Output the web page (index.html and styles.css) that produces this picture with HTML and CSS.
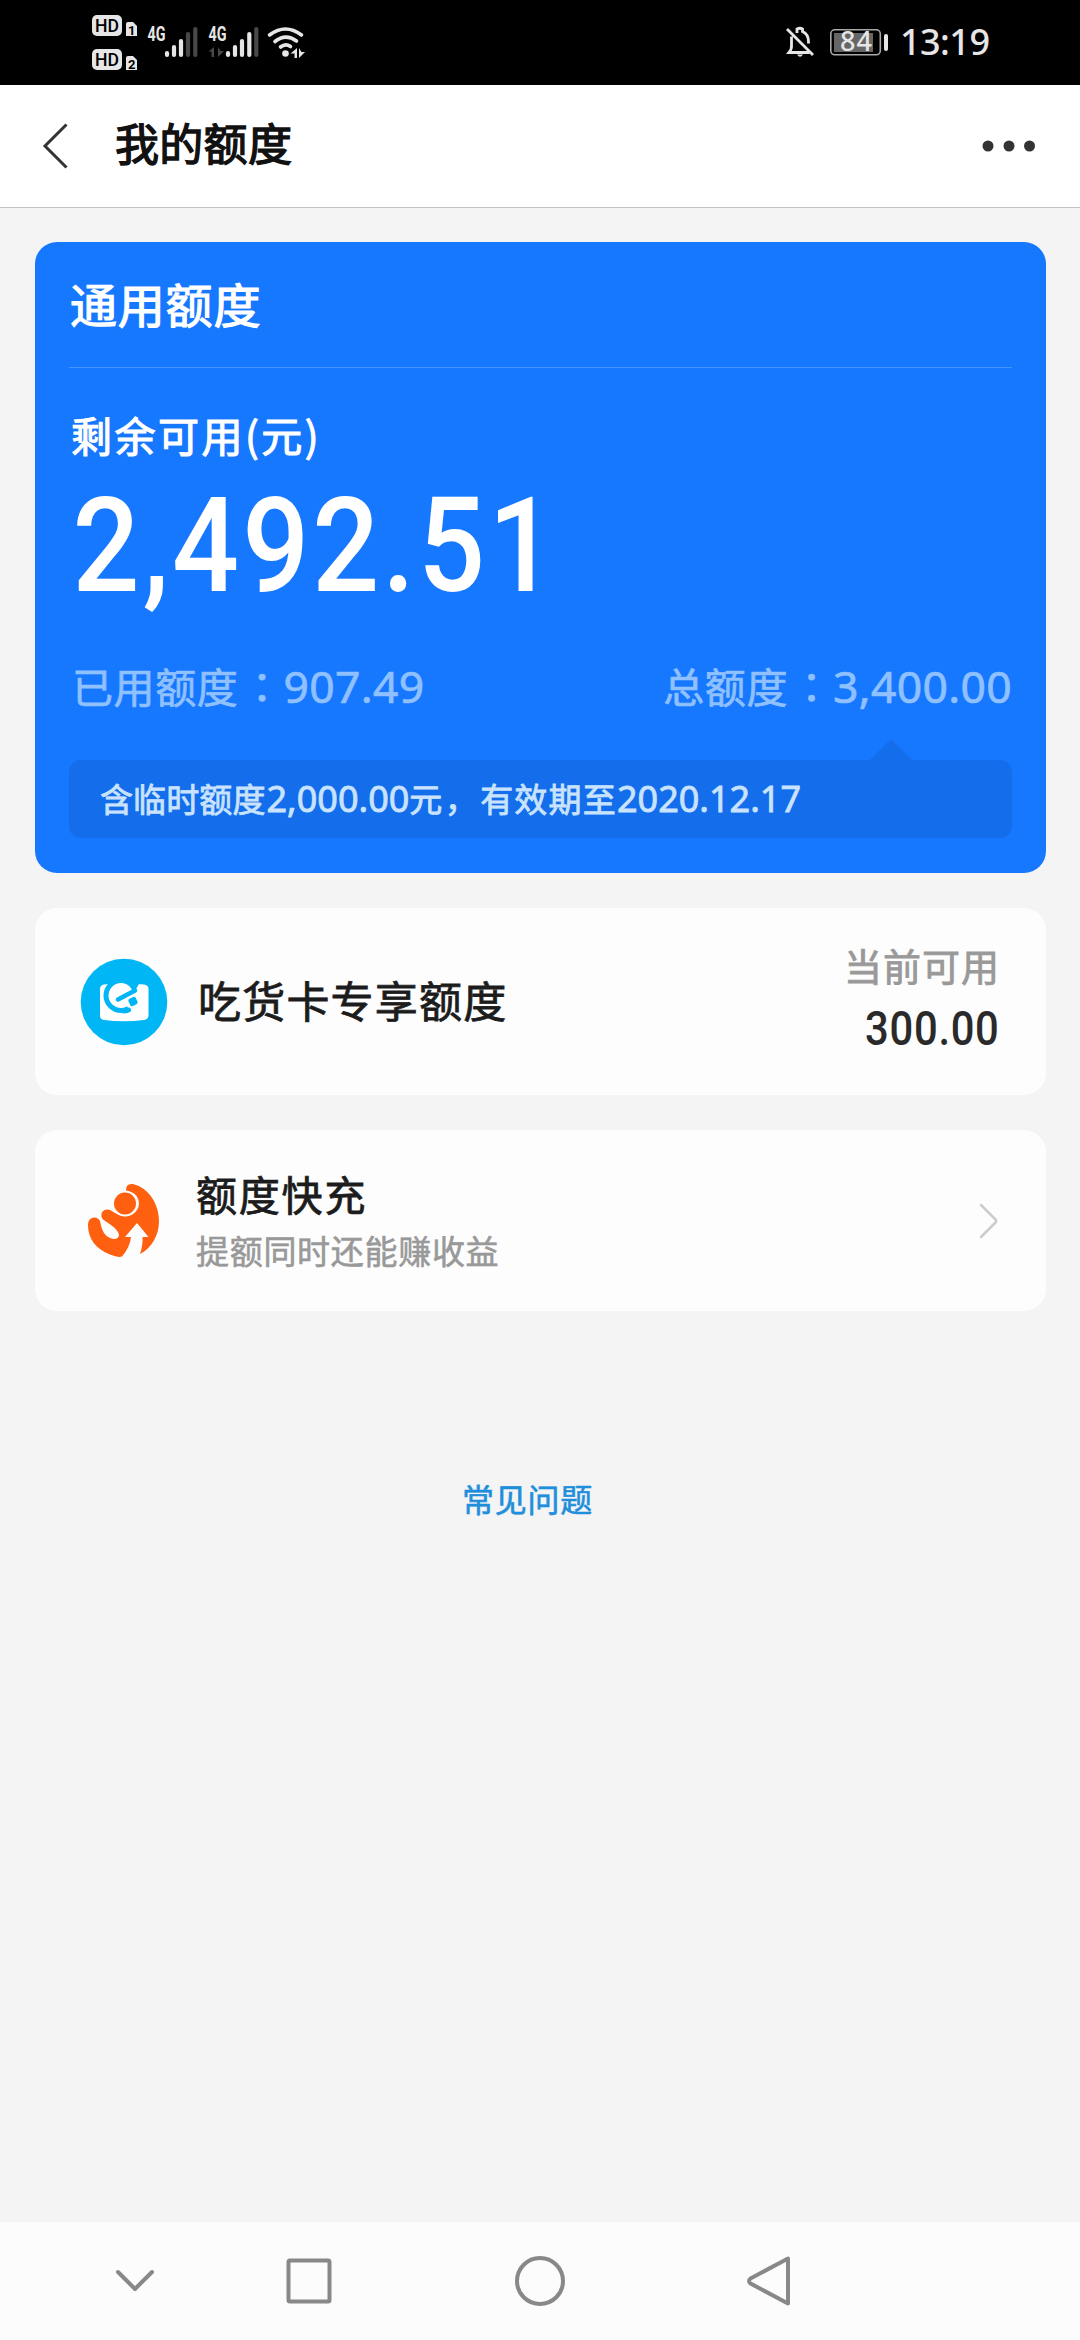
FILE: index.html
```html
<!DOCTYPE html>
<html lang="zh-CN">
<head>
<meta charset="utf-8">
<title>我的额度</title>
<link rel="stylesheet" href="styles.css">
</head>
<body>
<div class="screen">
  <div class="status">
    <svg class="status-left" width="220" height="85" viewBox="90 0 220 85">
      <g fill="#e6e6e6">
        <rect x="92" y="15" width="30" height="21" rx="5"/>
        <rect x="92" y="49" width="30" height="21" rx="5"/>
        <path d="M126 24q0-2 2-2h5l4 4v10h-11zM126 58q0-2 2-2h5l4 4v10h-11z"/>
      </g>
      <g class="hd" fill="#000">
        <text x="95" y="32" textLength="24" lengthAdjust="spacingAndGlyphs">HD</text>
        <text x="95" y="66" textLength="24" lengthAdjust="spacingAndGlyphs">HD</text>
      </g>
      <g class="sim" fill="#000"><text x="128" y="34.500">1</text><text x="128" y="68.500">2</text></g>
      <g class="net" fill="#e6e6e6">
        <text x="147.500" y="40.500" textLength="18" lengthAdjust="spacingAndGlyphs">4G</text>
        <text x="208.500" y="40.500" textLength="18" lengthAdjust="spacingAndGlyphs">4G</text>
      </g>
      <g stroke="#e6e6e6" stroke-width="4.200" stroke-linecap="round">
        <path d="M167 53v2M174 47v8M181 41v14"/>
        <path d="M228 53v2M235 47v8M242 41v14M249.300 34v21"/>
        <path stroke="#484848" d="M188 34v21M195.300 29v26M256.300 29v26"/>
      </g>
      <path fill="#484848" d="M214 47v10h-2.500v-5.500h-3zM218 47v10l6-6h-3.500z"/>
      <g fill="none" stroke="#e6e6e6" stroke-width="3.600" stroke-linecap="round">
        <path d="M269.500 35Q285.500 23 301.500 35M275 41.500Q285.500 33 296.500 41M280.500 47Q285.500 43 290.500 46.500"/>
      </g>
      <circle cx="285.500" cy="53.500" r="3.300" fill="#e6e6e6"/>
      <path fill="#e6e6e6" d="M297 48v10h-2.500v-4.500h-4zM299 48v10l6-6h-3.500z"/>
    </svg>
    <svg class="status-right" width="210" height="85" viewBox="780 0 210 85">
      <g fill="none" stroke="#e6e6e6" stroke-width="2.800" stroke-linecap="square">
        <path d="M788 30l24 24M808 52.500H789Q792 49 791.500 45V38M797 31.500v-2.500q3-1.500 5.500 0v2.500Q808.500 34 808.500 42"/>
      </g>
      <path fill="#e6e6e6" d="M797 54.500h6q-3 4.500-6 0z"/>
      <rect x="830.800" y="29.800" width="49.500" height="25" rx="4" fill="none" stroke="#a8a8a8" stroke-width="1.600"/>
      <rect x="834" y="33" width="39" height="19" fill="#666"/>
      <rect x="884" y="34" width="4" height="17" rx="2" fill="#e6e6e6"/>
      <text class="charge" x="840" y="51" textLength="32" fill="#e6e6e6">84</text>
      <text class="clock" x="900" y="55" textLength="90" fill="#e6e6e6">13:19</text>
    </svg>
  </div>

  <header class="header">
    <svg class="back" width="28" height="46" viewBox="0 0 28 46"><path d="M25.500 1.500L4 23l21.500 21.500" fill="none" stroke="#333" stroke-width="3"/></svg>
    <h1 class="title">我的额度</h1>
    <svg class="more" width="54" height="12" viewBox="0 0 54 12" fill="#333"><circle cx="6" cy="6" r="5.500"/><circle cx="27" cy="6" r="5.500"/><circle cx="47.500" cy="6" r="5.500"/></svg>
  </header>

  <main class="content">
    <section class="quota">
      <h2 class="quota-name">通用额度</h2>
      <div class="quota-label">剩余可用(元)</div>
      <div class="quota-amount"><span class="amount-text">2,492.51</span></div>
      <div class="quota-split">
        <div class="split-item">已用额度<span class="colon" lang="zh-TW">：</span><span class="num used">907.49</span></div>
        <div class="split-item">总额度<span class="colon" lang="zh-TW">：</span><span class="num total">3,400.00</span></div>
      </div>
      <div class="notice">
        <span>含临时额度</span><span class="num sum">2,000.00</span><span class="yuan">元，</span><span class="until">有效期至</span><span class="num date">2020.12.17</span>
      </div>
    </section>

    <section class="card card-food">
      <svg class="food-icon" width="88" height="88" viewBox="0 0 88 88">
        <circle cx="44" cy="44" r="43.300" fill="#00b6f5"/>
        <path fill="#fff" d="M20 31q0-4 4-4.500 20-2 40 0 4.500.500 4.500 4.500v26q0 4.500-4.500 5-20 2.500-40 0-4-.5-4-4.500z"/>
        <circle cx="41" cy="37.500" r="17.500" fill="#00b6f5"/>
        <path fill="#fff" d="M41 37.500L58 29l9-1v29H52L47.500 49z"/>
        <circle cx="41" cy="37.500" r="12.500" fill="#fff"/>
        <path fill="#00b6f5" d="M51 24l8 2-3 5-4 1z"/>
        <path fill="none" stroke="#00b6f5" stroke-width="5" stroke-linecap="round" d="M44 53q3-.2 4.500-1"/>
        <path fill="none" stroke="#00b6f5" stroke-width="4.500" stroke-linecap="round" d="M38 41.500L55 32.500"/>
        <rect x="49" y="39.500" width="8" height="8" rx="2" transform="rotate(-25 53 43.500)" fill="#00b6f5"/>
      </svg>
      <div class="food-name">吃货卡专享额度</div>
      <div class="food-side">
        <div class="side-label">当前可用</div>
        <div class="side-value"><span class="side-num">300.00</span></div>
      </div>
    </section>

    <section class="card card-boost">
      <svg class="boost-icon" width="72" height="76" viewBox="0 0 72 76">
        <path fill="#ff6010" d="M38 7Q38 0 45 1C61 5 71 21 71 38 71 52 64 65 52 71Q55 62 54.500 54H60.500L49 40 37 54H43Q42 64 34 73.500 30 75 22 71.500C8 66 0 56 0 42Q0 35 6 34.500 11.500 34.500 12.500 40C14 50 19 55 26 56Q30.500 56 31 52 30 47 23 42L15 36.500Q12 33 14.500 28.500 18 25 23 27.500 36 36.500 44 31.500 53 26 50.500 17 48 8.500 38.500 8.500z"/>
        <circle cx="37" cy="20.500" r="12" fill="#ff6010" stroke="#fdfdfd" stroke-width="2"/>
      </svg>
      <div class="boost-text">
        <div class="boost-name">额度快充</div>
        <div class="boost-desc">提额同时还能赚收益</div>
      </div>
      <svg class="go" width="20" height="36" viewBox="0 0 20 36"><path d="M2 2L16.500 16.500q1.500 1.500 0 3L2 34" fill="none" stroke="#ccc" stroke-width="2.500" stroke-linecap="round"/></svg>
    </section>

    <a class="faq">常见问题</a>
  </main>

  <nav class="nav">
    <svg width="1080" height="118" viewBox="0 2222 1080 118" fill="none" stroke="#888" stroke-width="4" stroke-linecap="round" stroke-linejoin="round">
      <path d="M118 2272l17 17 17-17"/>
      <rect x="288.500" y="2260.500" width="41" height="41" rx="1.500"/>
      <circle cx="540" cy="2281" r="23"/>
      <path d="M788 2258.500v45L750.500 2283.500q-3-2.500 0-5z"/>
    </svg>
  </nav>
</div>
</body>
</html>
```
FILE: styles.css
```css
* { box-sizing: border-box; }
body {
  margin: 0;
  background: #f4f4f4;
  font-family: "Noto Sans CJK SC", sans-serif;
}
h1, h2 { margin: 0; font-weight: 400; }
svg { display: block; flex: none; }
.screen { width: 1080px; height: 2340px; display: flex; flex-direction: column; }

.status { height: 85px; background: #000; display: flex; justify-content: space-between; padding: 0 90px; }
.hd { font: 500 19px Roboto, sans-serif; }
.sim { font: 700 13px Roboto, sans-serif; }
.net { font: 700 20px Roboto, sans-serif; }
.charge { font: 500 27px "Noto Sans", sans-serif; }
.clock { font: 500 36px "Noto Sans", sans-serif; }

.header {
  height: 123px;
  background: #fff;
  border-bottom: 1px solid #bfc2c2;
  display: flex;
  align-items: center;
  padding: 0 44px 0 41px;
}
.title {
  flex: 1;
  margin-left: 46px;
  font-size: 44px;
  letter-spacing: .3px;
  color: #111;
  -webkit-text-stroke: 1.400px #111;
  line-height: 60px;
  padding-bottom: 8px;
}

.content { flex: 1; padding: 34px 34px 0 35px; display: flex; flex-direction: column; }

.quota {
  height: 631px;
  border-radius: 22px;
  background: #1677ff;
  padding: 0 34px;
  color: #fff;
  display: flex;
  flex-direction: column;
}
.quota-name {
  height: 126px;
  border-bottom: 1px solid #4593ff;
  padding-left: 1px;
  font-size: 47px;
  letter-spacing: .8px;
  line-height: 122px;
  -webkit-text-stroke: 1.200px #fff;
}
.quota-label {
  margin-top: 36px;
  height: 60px;
  padding-left: 2px;
  line-height: 60px;
  font-size: 41px;
  letter-spacing: 2.500px;
  -webkit-text-stroke: 1.100px #fff;
}
.quota-amount { height: 140px; margin-top: 12px; line-height: 140px; }
.amount-text {
  display: inline-block;
  font: 500 131px/140px Roboto, sans-serif;
  transform: scaleX(.9);
  transform-origin: 0 50%;
  letter-spacing: 3.400px;
  padding-left: 4px;
}
.quota-split {
  margin-top: 39px;
  height: 60px;
  display: flex;
  justify-content: space-between;
  line-height: 60px;
  font-size: 41px;
  letter-spacing: .6px;
  color: #8fc0ff;
  -webkit-text-stroke: .7px #8fc0ff;
}
.split-item { display: flex; }
.split-item:first-child { padding-left: 3px; }
.colon { font-family: "Noto Sans CJK TC", sans-serif; width: 45px; padding-left: 3px; }
.num { font-family: "Noto Sans", sans-serif; padding-top: 1px; }
.used, .total { font-size: 44.500px; letter-spacing: .3px; }
.notice {
  position: relative;
  margin-top: 45px;
  height: 78px;
  border-radius: 12px;
  background: #146eeb;
  padding-left: 31px;
  display: flex;
  line-height: 76px;
  font-size: 33px;
  letter-spacing: .1px;
  color: #c9e3ff;
  -webkit-text-stroke: .8px #c9e3ff;
}
.notice::before {
  content: "";
  position: absolute;
  right: 100px;
  top: -21px;
  border: 21.500px solid transparent;
  border-top: 0;
  border-bottom: 21px solid #146eeb;
}
.notice .num { font-size: 36px; letter-spacing: 0; }
.notice .sum { padding-left: 1px; }
.yuan { letter-spacing: 2.400px; }
.until { letter-spacing: 1.200px; }

.card {
  margin-top: 35px;
  border-radius: 22px;
  background: #fdfdfd;
  display: flex;
  align-items: center;
}
.card-food { height: 187px; padding: 0 46px 0 45px; }
.food-name {
  flex: 1;
  margin-left: 30px;
  padding-bottom: 5px;
  font-size: 43px;
  letter-spacing: 1.200px;
  color: #1c1c1c;
  -webkit-text-stroke: .8px #1c1c1c;
}
.food-side { text-align: right; }
.side-label { font-size: 38px; line-height: 46px; padding-bottom: 8px; letter-spacing: 1px; color: #999; -webkit-text-stroke: .8px #999; }
.side-value { line-height: 66px; height: 66px; }
.side-num {
  display: inline-block;
  font: 500 48px/66px Roboto, sans-serif;
  color: #2a2a2a;
  letter-spacing: .8px;
  transform: scaleX(.87);
  transform-origin: 100% 50%;
}
.card-boost { height: 181px; padding: 0 47px 0 53px; }
.boost-text { flex: 1; margin-left: 36px; }
.boost-name { font-size: 41px; letter-spacing: 1.800px; line-height: 53px; padding-bottom: 5px; color: #1c1c1c; -webkit-text-stroke: .8px #1c1c1c; }
.boost-desc { font-size: 33px; letter-spacing: .7px; line-height: 50px; color: #999; -webkit-text-stroke: .6px #999; }

.faq {
  align-self: center;
  margin: 162px 26px 0 0;
  font-size: 32px;
  letter-spacing: .8px;
  line-height: 50px;
  color: #1f8fdc;
  -webkit-text-stroke: .6px #1f8fdc;
}
.nav { height: 118px; background: #fcfcfc; }
```
